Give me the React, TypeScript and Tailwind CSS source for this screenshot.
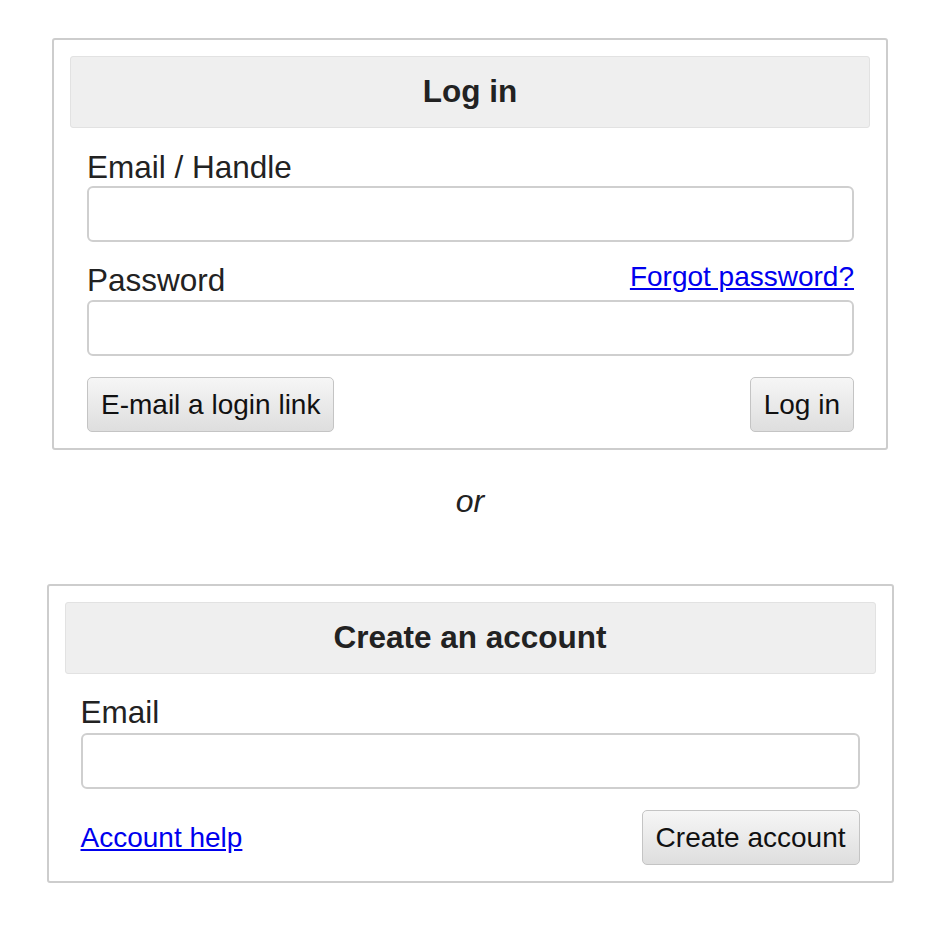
import React from 'react'

const btn =
  'h-[55px] px-[13px] border border-[#c4c4c4] rounded-[5px] bg-gradient-to-b from-[#f6f6f6] to-[#dedede] text-[#111] leading-none'

const input =
  'block w-full h-[56px] border-2 border-[#cfcfcf] rounded-[6px] bg-white px-3 outline-none'

const App: React.FC = () => {
  return (
    <div className="min-h-[940px] bg-white pt-[38px] font-['Liberation_Sans',Arial,sans-serif] text-[#222]">
      {/* Log in */}
      <div className="w-[836px] mx-auto border-2 border-[#cdcdcd] rounded-[3px] p-[16px]">
        <div className="h-[72px] bg-[#efefef] border border-[#e2e2e2] rounded-[3px] flex items-center justify-center text-[31.5px] font-bold">
          Log in
        </div>
        <div className="pl-[17px] pr-[16px]">
          <label className="block mt-[21px] text-[31.5px] leading-[36px]">Email / Handle</label>
          <input className={`${input} mt-[1px]`} />

          <div className="mt-[20px] h-[36px] flex items-start justify-between">
            <label className="text-[31.5px] leading-[36px]">Password</label>
            <a href="#" className="text-[28px] leading-[30px] text-[#0000ee] underline">
              Forgot password?
            </a>
          </div>
          <input type="password" className={`${input} mt-[2px]`} />

          <div className="mt-[21px] flex justify-between">
            <button className={`${btn} text-[28px]`}>E-mail a login link</button>
            <button className={`${btn} text-[28px]`}>Log in</button>
          </div>
        </div>
      </div>

      <div className="mt-[33px] text-center italic text-[32px] leading-[36px]">or</div>

      {/* Create an account */}
      <div className="w-[847px] mx-auto mt-[65px] border-2 border-[#cdcdcd] rounded-[3px] p-[16px]">
        <div className="h-[72px] bg-[#efefef] border border-[#e2e2e2] rounded-[3px] flex items-center justify-center text-[31.5px] font-bold">
          Create an account
        </div>
        <div className="px-[16px]">
          <label className="block mt-[20px] text-[31.5px] leading-[36px]">Email</label>
          <input className={`${input} mt-[3px] h-[55px]`} />
          <div className="mt-[21px] flex items-center justify-between">
            <a href="#" className="text-[28px] leading-[32px] text-[#0000ee] underline">
              Account help
            </a>
            <button className={`${btn} text-[28px]`}>Create account</button>
          </div>
        </div>
      </div>
    </div>
  )
}

export default App
